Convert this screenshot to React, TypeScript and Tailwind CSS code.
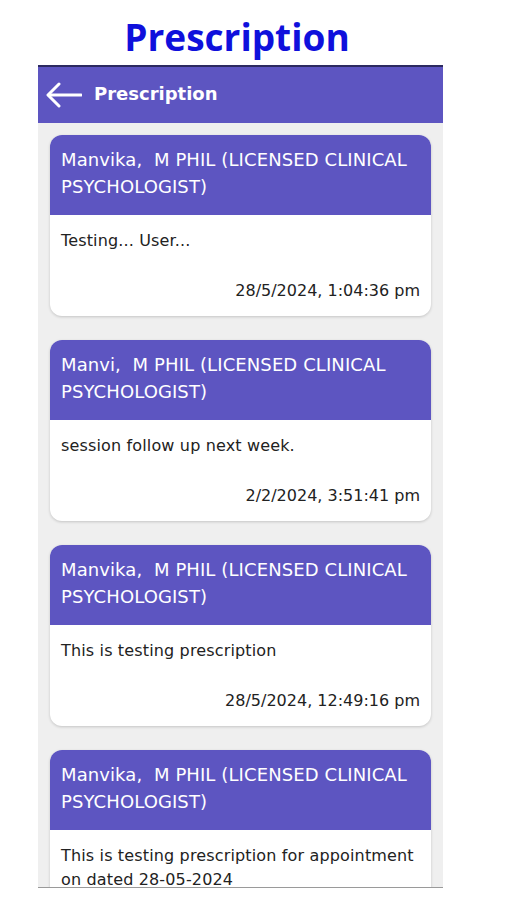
import React from "react";

const cards = [
  { name: "Manvika,  M PHIL (LICENSED CLINICAL PSYCHOLOGIST)", text: "Testing... User...", date: "28/5/2024, 1:04:36 pm" },
  { name: "Manvi,  M PHIL (LICENSED CLINICAL PSYCHOLOGIST)", text: "session follow up next week.", date: "2/2/2024, 3:51:41 pm" },
  { name: "Manvika,  M PHIL (LICENSED CLINICAL PSYCHOLOGIST)", text: "This is testing prescription", date: "28/5/2024, 12:49:16 pm" },
  { name: "Manvika,  M PHIL (LICENSED CLINICAL PSYCHOLOGIST)", text: "This is testing prescription for appointment on dated 28-05-2024", date: "28/5/2024, 12:00:00 pm" },
];

export default function App() {
  return (
    <div className="w-[506px] h-[900px] bg-white overflow-hidden" style={{ fontFamily: '"Open Sans", "DejaVu Sans", sans-serif' }}>
      <div className="h-[65px] flex items-center justify-center pr-[32px] pt-[8px]">
        <h1 className="text-[37px] font-bold text-[#0f10dc] leading-none" style={{ fontFamily: '"Open Sans", sans-serif' }}>Prescription</h1>
      </div>
      <div className="ml-[38px] w-[405px] h-[823px] border-t-2 border-[#2c2a60] border-b border-b-[#9a9a9a] bg-[#efefef] overflow-hidden flex flex-col">
        <div className="h-[56px] bg-[#5d55c1] flex items-center pl-[8px] gap-[12px] shrink-0">
          <svg width="36" height="26" viewBox="0 0 36 26" fill="none" stroke="white" strokeWidth="3" strokeLinecap="round" strokeLinejoin="round">
            <path d="M35 13H3" />
            <path d="M13 2L2 13L13 24" />
          </svg>
          <span className="text-white text-[18px] font-extrabold leading-none mb-[3px]" style={{ fontFamily: '"DejaVu Sans", sans-serif' }}>Prescription</span>
        </div>
        <div className="flex flex-col gap-[24px] px-[12px] pt-[12px]">
          {cards.map((c, i) => (
            <div key={i} className="bg-white rounded-[12px] overflow-hidden shadow-[0_1px_3px_rgba(0,0,0,0.18)] shrink-0">
              <div className="bg-[#5d55c1] px-[11px] pt-[11px] pb-[13px] text-white text-[18px] tracking-[0.1px] leading-[27px] h-[80px] whitespace-pre-wrap" style={{ fontFamily: '"DejaVu Sans", sans-serif' }}>
                {c.name}
              </div>
              <div className="pl-[11px] pr-[10px] pt-[14px] pb-[13px] text-[16px] text-[#222] leading-[24px]" style={{ fontFamily: '"DejaVu Sans", sans-serif' }}>
                <div className="min-h-[24px] tracking-[0.15px]">{c.text}</div>
                <div className="text-right mt-[26px] pr-[1px]">{c.date}</div>
              </div>
            </div>
          ))}
        </div>
      </div>
    </div>
  );
}
